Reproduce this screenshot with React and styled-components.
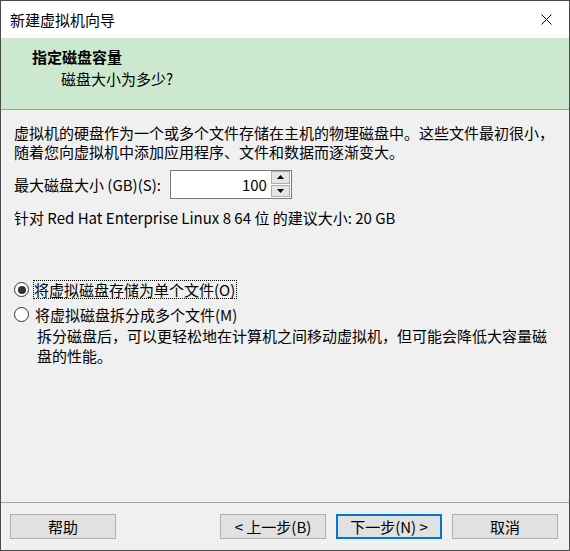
import React from "react";
import styled, { createGlobalStyle } from "styled-components";

const Global = createGlobalStyle`
  html, body { margin: 0; padding: 0; background: #ffffff; }
  body { font-family: "Noto Sans CJK SC", "Noto Sans", sans-serif; font-size: 15px; color: #000; }
  * { box-sizing: border-box; }
`;

const Window = styled.div`
  width: 570px;
  height: 551px;
  border: 1px solid #4a4a4a;
  display: flex;
  flex-direction: column;
  background: #f0f0f0;
`;

const TitleBar = styled.div`
  height: 37px;
  background: #ffffff;
  display: flex;
  align-items: center;
  justify-content: space-between;
  padding-left: 9px;
  flex-shrink: 0;
`;

const TitleText = styled.span`
  font-size: 15px;
  line-height: 19px;
`;

const CloseButton = styled.div`
  width: 46px;
  height: 37px;
  display: flex;
  align-items: center;
  justify-content: center;
`;

const Header = styled.div`
  height: 72px;
  background: #cce8cf;
  padding: 9px 0 0 31px;
  border-bottom: 1px solid #a0a0a0;
  flex-shrink: 0;
`;

const HeaderTitle = styled.div`
  font-weight: 700;
  line-height: 20px;
`;

const HeaderSub = styled.div`
  padding-left: 29px;
  margin-top: 2px;
  line-height: 20px;
`;

const Body = styled.div`
  flex: 1;
  padding: 13px 13px 0 13px;
  display: flex;
  flex-direction: column;
`;

const Para = styled.p`
  margin: 0;
  line-height: 19px;
  white-space: nowrap;
`;

const SizeRow = styled.div`
  display: flex;
  align-items: center;
  gap: 9px;
  margin-top: 9px;
  height: 29px;
`;

const Label = styled.span`
  line-height: 19px;
`;

const SpinBox = styled.div`
  width: 122px;
  height: 29px;
  border: 1px solid #7a7a7a;
  background: #ffffff;
  display: flex;
  align-items: stretch;
`;

const SpinValue = styled.div`
  flex: 1;
  display: flex;
  align-items: center;
  justify-content: flex-end;
  padding-right: 4px;
  line-height: 19px;
`;

const SpinButtons = styled.div`
  width: 19px;
  margin: 0 1px 1px 0;
  display: flex;
  flex-direction: column;
  gap: 1px;
`;

const SpinBtn = styled.div`
  flex: 1;
  background: #e5e5e5;
  border: 1px solid #adadad;
  display: flex;
  align-items: center;
  justify-content: center;
`;

const Recommend = styled.div`
  margin-top: 9px;
  line-height: 19px;
`;

const RadioGroup = styled.div`
  margin-top: 53px;
  display: flex;
  flex-direction: column;
  gap: 6px;
`;

const RadioRow = styled.div`
  display: flex;
  align-items: center;
  height: 19px;
`;

const RadioCircle = styled.span`
  width: 15px;
  height: 15px;
  border-radius: 50%;
  border: 1px solid #333333;
  background: #ffffff;
  display: flex;
  align-items: center;
  justify-content: center;
  margin-right: ${(p) => (p.$focused ? "4px" : "5px")};
  &::after {
    content: "";
    width: 8px;
    height: 8px;
    border-radius: 50%;
    background: #333333;
    display: ${(p) => (p.$checked ? "block" : "none")};
  }
`;

const RadioLabel = styled.span`
  line-height: 17px;
  padding: 0 1px 0 0;
  border: 1px ${(p) => (p.$focused ? "dotted #000" : "solid transparent")};
`;

const Desc = styled.p`
  margin: 2px 0 0 23px;
  line-height: 20px;
  white-space: nowrap;
`;

const Footer = styled.div`
  height: 48px;
  border-top: 1px solid #a0a0a0;
  flex-shrink: 0;
  display: flex;
  padding: 11px 11px 0 9px;
  gap: 10px;
`;

const Button = styled.div`
  width: 106px;
  height: 25px;
  background: #e1e1e1;
  border: ${(p) => (p.$default ? "2px solid #0078d7" : "1px solid #adadad")};
  display: flex;
  align-items: center;
  justify-content: center;
  line-height: 19px;
  margin-left: ${(p) => (p.$push ? "auto" : "0")};
`;

function Arrow({ up }) {
  return (
    <svg width="7" height="4" viewBox="0 0 7 4">
      {up ? <polygon points="0,4 7,4 3.5,0" fill="#000" /> : <polygon points="0,0 7,0 3.5,4" fill="#000" />}
    </svg>
  );
}

export default function App() {
  return (
    <>
      <Global />
      <Window>
        <TitleBar>
          <TitleText>新建虚拟机向导</TitleText>
          <CloseButton>
            <svg width="11" height="11" viewBox="0 0 11 11">
              <path d="M0.5 0.5 L10.5 10.5 M10.5 0.5 L0.5 10.5" stroke="#000" strokeWidth="1" />
            </svg>
          </CloseButton>
        </TitleBar>
        <Header>
          <HeaderTitle>指定磁盘容量</HeaderTitle>
          <HeaderSub>磁盘大小为多少?</HeaderSub>
        </Header>
        <Body>
          <Para>
            虚拟机的硬盘作为一个或多个文件存储在主机的物理磁盘中。这些文件最初很小，
            <br />
            随着您向虚拟机中添加应用程序、文件和数据而逐渐变大。
          </Para>
          <SizeRow>
            <Label>最大磁盘大小 (GB)(S):</Label>
            <SpinBox>
              <SpinValue>100</SpinValue>
              <SpinButtons>
                <SpinBtn><Arrow up /></SpinBtn>
                <SpinBtn><Arrow /></SpinBtn>
              </SpinButtons>
            </SpinBox>
          </SizeRow>
          <Recommend>针对 Red Hat Enterprise Linux 8 64 位 的建议大小: 20 GB</Recommend>
          <RadioGroup>
            <RadioRow>
              <RadioCircle $checked $focused />
              <RadioLabel $focused>将虚拟磁盘存储为单个文件(O)</RadioLabel>
            </RadioRow>
            <RadioRow>
              <RadioCircle />
              <RadioLabel>将虚拟磁盘拆分成多个文件(M)</RadioLabel>
            </RadioRow>
          </RadioGroup>
          <Desc>
            拆分磁盘后，可以更轻松地在计算机之间移动虚拟机，但可能会降低大容量磁
            <br />
            盘的性能。
          </Desc>
        </Body>
        <Footer>
          <Button>帮助</Button>
          <Button $push>&lt; 上一步(B)</Button>
          <Button $default>下一步(N) &gt;</Button>
          <Button>取消</Button>
        </Footer>
      </Window>
    </>
  );
}
